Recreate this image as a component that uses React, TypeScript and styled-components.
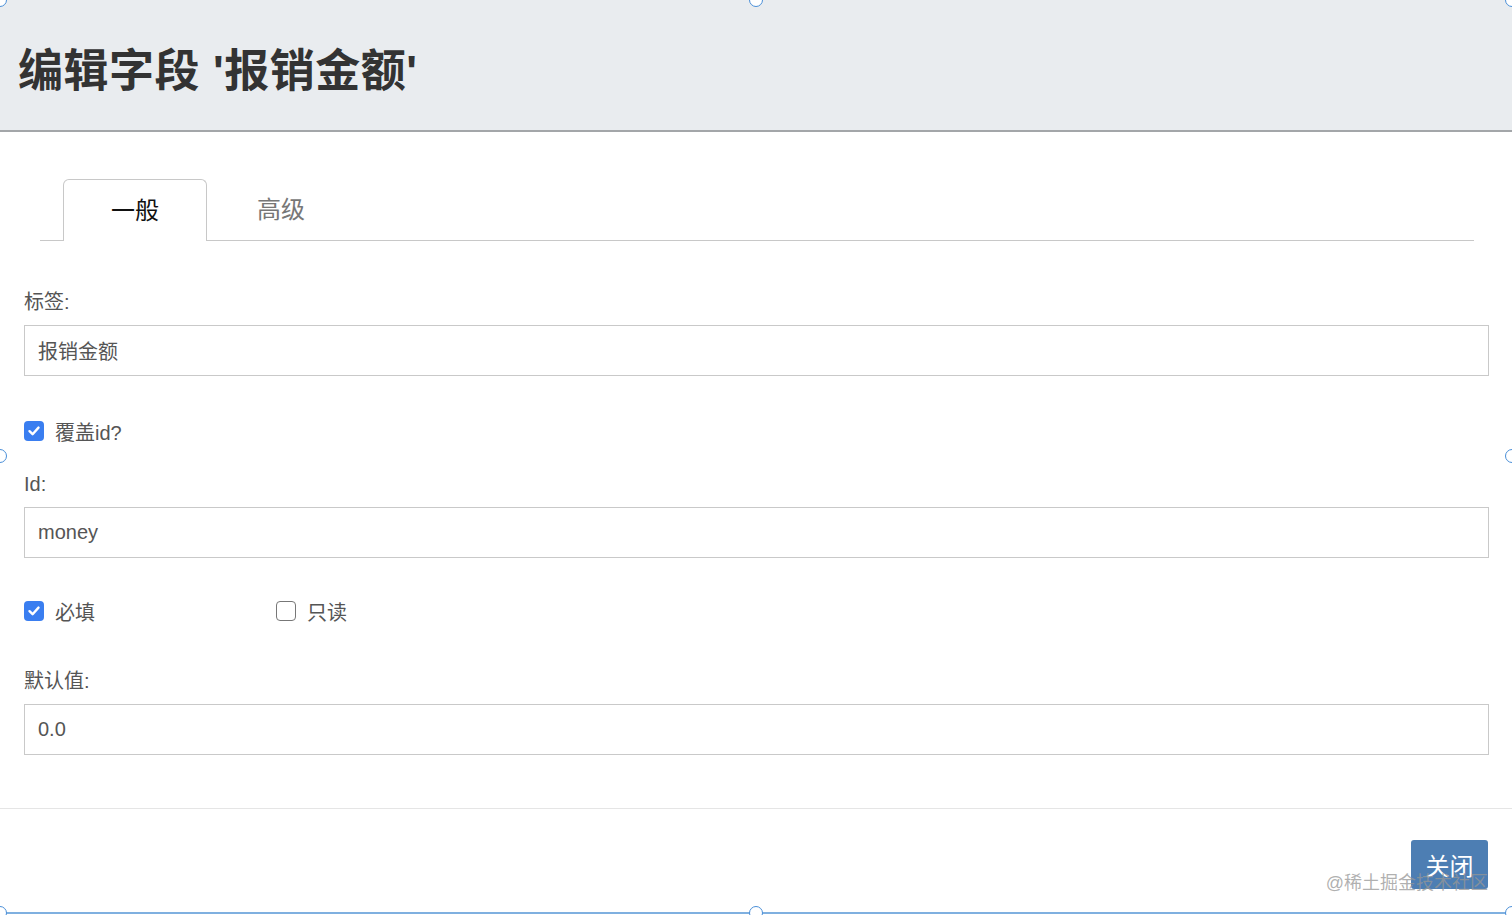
import React from 'react';
import styled, { createGlobalStyle } from 'styled-components';

const GlobalStyle = createGlobalStyle`
  html, body {
    margin: 0;
    padding: 0;
    background: #fff;
  }
  body {
    font-family: 'Liberation Sans', 'Noto Sans CJK SC', sans-serif;
    color: #555;
  }
`;

const Page = styled.div`
  position: relative;
  width: 1512px;
  height: 915px;
  overflow: hidden;
  background: #fff;
`;

const Header = styled.div`
  display: flex;
  align-items: center;
  padding-left: 18px;
  background: #e9ecef;
  border-bottom: 2px solid #a3a6a9;
  box-sizing: border-box;
  height: 132px;
`;

const Title = styled.h1`
  margin: 0;
  padding-top: 4px;
  font-family: 'Liberation Sans', 'Noto Sans CJK SC', sans-serif;
  font-size: 45px;
  font-weight: 700;
  color: #333;
  letter-spacing: 0.5px;
`;

const Body = styled.div`
  padding: 47px 23px 0 24px;
`;

const TabNav = styled.div`
  display: flex;
  margin: 0 15px 47px 16px;
  padding-left: 23px;
  border-bottom: 1px solid #c8c8c8;
  height: 61px;
`;

const Tab = styled.div<{ $active?: boolean }>`
  display: flex;
  align-items: center;
  padding: 0 ${({ $active }) => ($active ? '47px' : '49px')} 5px;
  font-size: 24px;
  color: ${({ $active }) => ($active ? '#111' : '#777')};
  border: 1px solid ${({ $active }) => ($active ? '#c8c8c8' : 'transparent')};
  border-bottom: none;
  border-radius: 6px 6px 0 0;
  background: #fff;
  margin-bottom: ${({ $active }) => ($active ? '-1px' : '0')};
`;

const Group = styled.div<{ $gap: number }>`
  margin-bottom: ${({ $gap }) => $gap}px;
`;

const Label = styled.div`
  font-size: 20px;
  line-height: 28px;
  color: #555;
  margin-bottom: 9px;
`;

const Input = styled.div`
  height: 51px;
  box-sizing: border-box;
  border: 1px solid #c9c9c9;
  display: flex;
  align-items: center;
  padding-left: 13px;
  font-size: 20px;
  color: #555;
  background: #fff;
`;

const CheckRow = styled.div`
  display: flex;
  align-items: center;
  height: 28px;
`;

const CheckItem = styled.label<{ $width?: number }>`
  display: flex;
  align-items: center;
  gap: 11px;
  width: ${({ $width }) => ($width ? `${$width}px` : 'auto')};
  font-size: 20px;
  color: #555;
`;

const Box = styled.span<{ $checked: boolean }>`
  width: 20px;
  height: 20px;
  box-sizing: border-box;
  border-radius: 4px;
  display: flex;
  align-items: center;
  justify-content: center;
  background: ${({ $checked }) => ($checked ? '#3a7ef0' : '#fff')};
  border: ${({ $checked }) => ($checked ? 'none' : '1.5px solid #777')};
`;

const Footer = styled.div`
  margin-top: 53px;
  border-top: 1px solid #e5e5e5;
  padding: 31px 24px 0 0;
  display: flex;
  justify-content: flex-end;
  position: relative;
`;

const Button = styled.button`
  width: 77px;
  height: 49px;
  border: none;
  border-radius: 3px;
  background: #4d7eb3;
  color: #fff;
  font-family: 'Liberation Sans', 'Noto Sans CJK SC', sans-serif;
  font-size: 24px;
  padding: 0;
`;

const Watermark = styled.div`
  position: absolute;
  right: 24px;
  top: 59px;
  font-family: 'Liberation Sans', 'Noto Sans CJK SC', sans-serif;
  font-size: 18px;
  color: rgba(150, 150, 150, 0.75);
  pointer-events: none;
`;

const SelectionLine = styled.div`
  position: absolute;
  left: 0;
  right: 0;
  top: 912px;
  height: 2px;
  background: #7fb0e0;
`;

const Handle = styled.span`
  position: absolute;
  width: 12px;
  height: 12px;
  margin: -7px 0 0 -7px;
  border-radius: 50%;
  border: 1.5px solid #4a8fd8;
  background: #fff;
`;

const Check = ({ checked }: { checked: boolean }) => (
  <Box $checked={checked}>
    {checked && (
      <svg width="14" height="14" viewBox="0 0 14 14">
        <path d="M2.5 7.2 L5.6 10.2 L11.5 3.6" fill="none" stroke="#fff" strokeWidth="2.4" strokeLinecap="round" strokeLinejoin="round" />
      </svg>
    )}
  </Box>
);

const handles = [
  [0, 0], [756, 0], [1512, 0],
  [0, 456], [1512, 456],
  [0, 913], [756, 913], [1512, 913],
];

export default function App() {
  return (
    <Page>
      <GlobalStyle />
      <Header>
        <Title>编辑字段 '报销金额'</Title>
      </Header>
      <Body>
        <TabNav>
          <Tab $active>一般</Tab>
          <Tab>高级</Tab>
        </TabNav>
        <Group $gap={41}>
          <Label>标签:</Label>
          <Input>报销金额</Input>
        </Group>
        <Group $gap={25}>
          <CheckRow>
            <CheckItem>
              <Check checked />
              覆盖id?
            </CheckItem>
          </CheckRow>
        </Group>
        <Group $gap={39}>
          <Label>Id:</Label>
          <Input>money</Input>
        </Group>
        <Group $gap={42}>
          <CheckRow>
            <CheckItem $width={252}>
              <Check checked />
              必填
            </CheckItem>
            <CheckItem>
              <Check checked={false} />
              只读
            </CheckItem>
          </CheckRow>
        </Group>
        <Group $gap={0}>
          <Label>默认值:</Label>
          <Input>0.0</Input>
        </Group>
      </Body>
      <Footer>
        <Button>关闭</Button>
        <Watermark>@稀土掘金技术社区</Watermark>
      </Footer>
      <SelectionLine />
      {handles.map(([x, y]) => (
        <Handle key={`${x}-${y}`} style={{ left: x, top: y }} />
      ))}
    </Page>
  );
}
